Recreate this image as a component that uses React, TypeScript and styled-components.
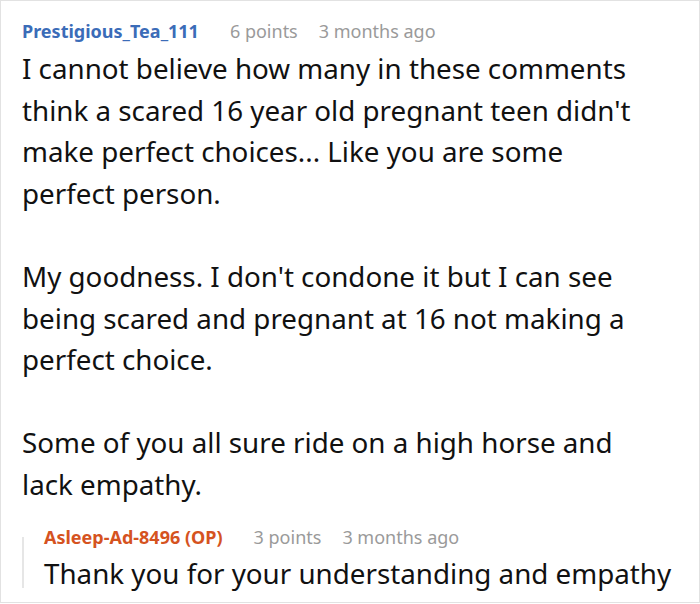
import React from "react";
import styled, { createGlobalStyle } from "styled-components";

const Global = createGlobalStyle`
  html, body { margin: 0; padding: 0; background: #fff; }
  body { font-family: "Noto Sans", "Open Sans", sans-serif; }
`;

const Card = styled.div`
  box-sizing: border-box;
  width: 700px;
  height: 603px;
  border: 1px solid #e2e2e2;
  padding: 16px 0 0 21px;
  overflow: hidden;
  background: #fff;
`;

const Meta = styled.div`
  display: flex;
  align-items: baseline;
  font-size: 18px;
  line-height: 28px;
`;

const Author = styled.span<{ $color: string }>`
  color: ${(p) => p.$color};
  font-weight: 700;
  margin-right: 31px;
`;

const Info = styled.span`
  color: #9a9a9a;
  margin-right: 21px;
`;

const Body = styled.div`
  color: #111;
  font-size: 27.75px;
  line-height: 41.6px;
  margin-top: 3px;
  p { margin: 0 0 41.6px 0; }
  p:last-child { margin-bottom: 0; }
`;

const Reply = styled.div`
  margin-top: 17px;
  display: flex;
`;

const Rule = styled.div`
  width: 2px;
  background: #e6e6e6;
  margin-top: 14px;
  margin-bottom: 6px;
  flex-shrink: 0;
`;

const ReplyInner = styled.div`
  padding-left: 20px;
`;

const ReplyBody = styled(Body)`
  margin-top: 2px;
`;

export default function App() {
  return (
    <>
      <Global />
      <Card>
        <Meta>
          <Author $color="#3b6cb8">Prestigious_Tea_111</Author>
          <Info>6 points</Info>
          <Info>3 months ago</Info>
        </Meta>
        <Body>
          <p>
            I cannot believe how many in these comments
            <br />
            think a scared 16 year old pregnant teen didn't
            <br />
            make perfect choices... Like you are some
            <br />
            perfect person.
          </p>
          <p>
            My goodness. I don't condone it but I can see
            <br />
            being scared and pregnant at 16 not making a
            <br />
            perfect choice.
          </p>
          <p>
            Some of you all sure ride on a high horse and
            <br />
            lack empathy.
          </p>
        </Body>
        <Reply>
          <Rule />
          <ReplyInner>
            <Meta>
              <Author $color="#d5531f">Asleep-Ad-8496 (OP)</Author>
              <Info>3 points</Info>
              <Info>3 months ago</Info>
            </Meta>
            <ReplyBody>
              <p>Thank you for your understanding and empathy</p>
            </ReplyBody>
          </ReplyInner>
        </Reply>
      </Card>
    </>
  );
}
